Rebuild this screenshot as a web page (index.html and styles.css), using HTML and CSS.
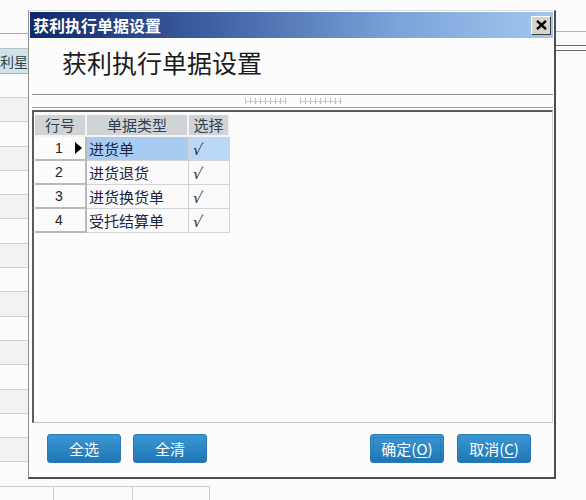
FILE: index.html
```html
<!DOCTYPE html>
<html lang="zh-CN">
<head>
<meta charset="utf-8">
<title>获利执行单据设置</title>
<link rel="stylesheet" href="styles.css">
</head>
<body>
<div class="app">
  <div class="app-main">
    <div class="side-left">
      <div class="sl-top"></div>
      <div class="sl-gap"></div>
      <div class="sl-cell">利星</div>
      <div class="sl-row first"></div>
      <div class="sl-row alt"></div>
      <div class="sl-row"></div>
      <div class="sl-row alt"></div>
      <div class="sl-row"></div>
      <div class="sl-row alt"></div>
      <div class="sl-row"></div>
      <div class="sl-row alt"></div>
      <div class="sl-row"></div>
      <div class="sl-row alt"></div>
      <div class="sl-row"></div>
      <div class="sl-row alt"></div>
      <div class="sl-row"></div>
      <div class="sl-row alt"></div>
      <div class="sl-row"></div>
      <div class="sl-row alt"></div>
      <div class="sl-row"></div>
    </div>
    <div class="app-mid"></div>
    <div class="side-right">
      <div class="sr-a"></div>
      <div class="sr-b"></div>
      <div class="sr-c"></div>
    </div>
  </div>
  <div class="app-bottom">
    <div class="ab-cell c1"></div>
    <div class="ab-cell c2"></div>
    <div class="ab-cell c3"></div>
  </div>
</div>

<div class="dialog">
  <div class="titlebar">
    <span class="title-text">获利执行单据设置</span>
    <span class="close-btn">
      <svg width="11" height="10" viewBox="0 0 11 10"><path d="M1 0.8 L10 9.2 M10 0.8 L1 9.2" stroke="#000" stroke-width="2.4" fill="none"/></svg>
    </span>
  </div>
  <div class="head">获利执行单据设置</div>
  <div class="splitter">
    <span class="grip"></span>
    <span class="grip"></span>
  </div>
  <div class="panel">
    <div class="grid">
      <div class="th">行号</div>
      <div class="th">单据类型</div>
      <div class="th">选择</div>

      <div class="rh"><span class="num">1</span><svg class="pointer" width="7" height="12" viewBox="0 0 7 12"><path d="M0 0 L7 6 L0 12 Z" fill="#000"/></svg></div>
      <div class="td sel">进货单</div>
      <div class="td chk sel2"><span class="mark">√</span></div>

      <div class="rh"><span class="num">2</span></div>
      <div class="td">进货退货</div>
      <div class="td chk"><span class="mark">√</span></div>

      <div class="rh"><span class="num">3</span></div>
      <div class="td">进货换货单</div>
      <div class="td chk"><span class="mark">√</span></div>

      <div class="rh"><span class="num">4</span></div>
      <div class="td">受托结算单</div>
      <div class="td chk"><span class="mark">√</span></div>
    </div>
  </div>
  <div class="buttons">
    <span class="btn">全选</span>
    <span class="btn">全清</span>
    <span class="spacer"></span>
    <span class="btn focus">确定(<u>O</u>)</span>
    <span class="btn">取消(<u>C</u>)</span>
  </div>
</div>
</body>
</html>
```
FILE: styles.css
```css
* { box-sizing: border-box; margin: 0; padding: 0; }
html, body { width: 586px; height: 500px; overflow: hidden; }
body {
  background: #fbfbfc;
  font-family: "Noto Sans CJK SC", "Noto Sans", sans-serif;
  position: relative;
}

/* background application */
.app { display: flex; flex-direction: column; height: 500px; }
.app-main { display: flex; height: 486px; overflow: hidden; flex: none; }
.side-left { width: 28px; display: flex; flex-direction: column; overflow: hidden; flex: none; }
.sl-top { height: 34px; flex: none; border-bottom: 1px solid #a9a9a9; }
.sl-gap { height: 14px; flex: none; }
.sl-cell {
  height: 26px; flex: none;
  background: #d2e3e7;
  border-top: 1px solid #b3c3c7;
  border-bottom: 1px solid #a7b7bb;
  font-size: 14px; line-height: 24px; color: #2a4654;
  white-space: nowrap; overflow: hidden;
}
.sl-row { height: 24.3px; flex: none; border-bottom: 1px solid #d0d0d0; }
.sl-row.first { height: 24px; }
.sl-row.alt { background: #f2f2f3; }
.app-mid { flex: 1; }
.side-right { width: 30px; flex: none; display: flex; flex-direction: column; }
.sr-a { height: 32px; border-bottom: 1px solid #b4b4b4; }
.sr-b { height: 14px; border-bottom: 1px solid #6c6c6c; }
.sr-c { height: 5px; border-bottom: 1px solid #6c6c6c; }
.app-bottom { display: flex; height: 14px; flex: none; }
.ab-cell { border-top: 1px solid #cdcdcd; border-right: 1px solid #cdcdcd; height: 14px; }
.ab-cell.c1 { width: 54px; }
.ab-cell.c2 { width: 79px; }
.ab-cell.c3 { width: 77px; }

/* dialog window */
.dialog {
  position: absolute; left: 28px; top: 10px;
  width: 528px; height: 469px;
  border-top: 1px solid #dedede;
  border-left: 1px solid #8e8e8e;
  border-right: 2px solid #4d4d4d;
  border-bottom: 2px solid #4d4d4d;
  padding: 1px 1px 0 1px;
  background: #fcfcfd;
  display: flex; flex-direction: column;
}
.titlebar {
  height: 26px; flex: none;
  display: flex; align-items: center;
  padding-left: 3px;
  background: linear-gradient(to right, #0d286b 0%, #3f61a3 35%, #7aa3d8 70%, #a3c7ee 100%);
}
.title-text { color: #fff; font-weight: bold; font-size: 16px; line-height: 26px; }
.close-btn {
  margin-left: auto; margin-right: 2px;
  width: 20px; height: 19px;
  background: #d6d3ce;
  border: 1px solid; border-color: #ffffff #404040 #404040 #ffffff;
  display: flex; align-items: center; justify-content: center;
}
.head {
  height: 56px; flex: none;
  padding: 9px 0 0 32px;
  font-size: 25px; line-height: 30px; color: #1c1c1c;
}
.splitter {
  height: 14px; flex: none; margin-left: 2px;
  border-top: 1px solid #8c8c8c;
  border-bottom: 1px solid #9e9e9e;
  display: flex; align-items: center; gap: 13px;
  padding-left: 213px;
}
.grip {
  width: 42px; height: 6px;
  background:
    linear-gradient(#cccccc, #cccccc) 0 3px / 100% 1px no-repeat,
    repeating-linear-gradient(90deg, #bdbdbd 0 1px, transparent 1px 5px);
}
.panel {
  margin: 2px 0 0 2px; height: 313px; flex: none;
  border-top: 2px solid #5c5c5c;
  border-left: 2px solid #5c5c5c;
  border-right: 1px solid #cfcfcf;
  border-bottom: 1px solid #c2c2c2;
  padding: 3px 0 0 1px;
  background: #fcfcfd;
}
.grid {
  display: grid;
  grid-template-columns: 52px 102px 41px;
  grid-template-rows: 22px repeat(4, 24px);
  width: max-content;
}
.th {
  background: #d1d4d7;
  border-right: 2px solid #f3f3f5;
  border-bottom: 2px solid #f3f3f5;
  font-size: 15px; line-height: 20px; text-align: center; color: #2f4150;
}
.rh {
  background: #fcfcfc;
  border-right: 2px solid #b9b9b9;
  border-bottom: 2px solid #b9b9b9;
  display: flex; align-items: center;
  padding-left: 20px;
}
.num { font-family: "Liberation Sans", sans-serif; font-size: 14px; color: #222; }
.pointer { margin-left: auto; margin-right: 3px; }
.td {
  background: #fafafa;
  border-right: 1px solid #d4d4d4;
  border-bottom: 1px solid #d4d4d4;
  padding-left: 2px;
  font-size: 15px; line-height: 23px; color: #1c2444;
  white-space: nowrap;
}
.td.sel { background: #a8cbf2; }
.td.sel2 { background: #bad7f6; }
.chk { padding-left: 4px; }
.mark {
  display: inline-block;
  font-family: "DejaVu Sans", sans-serif; font-size: 15px;
  line-height: 15px; margin-top: 5px; color: #2c3040;
  transform: skewX(-8deg);
}

.buttons {
  flex: 1;
  display: flex; align-items: flex-start; gap: 12px;
  padding: 11px 22px 0 17px;
}
.spacer { flex: 1; }
.btn {
  width: 74px; height: 29px;
  border-radius: 3px;
  background: linear-gradient(#3b97d3, #1f76b5);
  border: 1px solid #2a7ab5;
  color: #fff; font-size: 15px;
  display: flex; align-items: center; justify-content: center;
}
.btn.focus { outline: 1px dotted #606060; outline-offset: -4px; }
.btn.focus + .btn { margin-left: 1px; }
.btn u { text-underline-offset: 2px; }
```
